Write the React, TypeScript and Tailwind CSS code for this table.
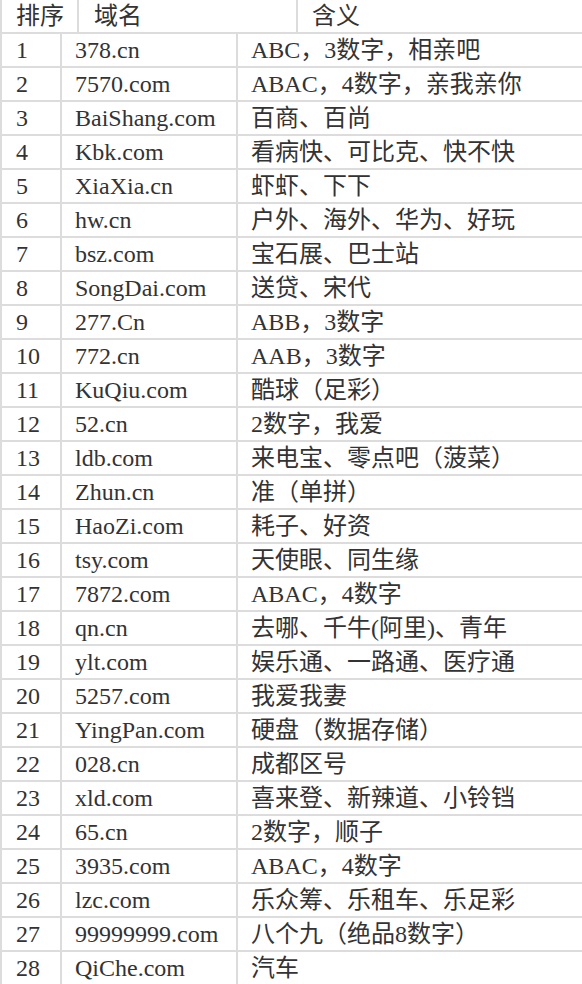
const rows: [string, string][] = [
  ['378.cn', 'ABC，3数字，相亲吧'],
  ['7570.com', 'ABAC，4数字，亲我亲你'],
  ['BaiShang.com', '百商、百尚'],
  ['Kbk.com', '看病快、可比克、快不快'],
  ['XiaXia.cn', '虾虾、下下'],
  ['hw.cn', '户外、海外、华为、好玩'],
  ['bsz.com', '宝石展、巴士站'],
  ['SongDai.com', '送贷、宋代'],
  ['277.Cn', 'ABB，3数字'],
  ['772.cn', 'AAB，3数字'],
  ['KuQiu.com', '酷球（足彩）'],
  ['52.cn', '2数字，我爱'],
  ['ldb.com', '来电宝、零点吧（菠菜）'],
  ['Zhun.cn', '准（单拼）'],
  ['HaoZi.com', '耗子、好资'],
  ['tsy.com', '天使眼、同生缘'],
  ['7872.com', 'ABAC，4数字'],
  ['qn.cn', '去哪、千牛(阿里)、青年'],
  ['ylt.com', '娱乐通、一路通、医疗通'],
  ['5257.com', '我爱我妻'],
  ['YingPan.com', '硬盘（数据存储）'],
  ['028.cn', '成都区号'],
  ['xld.com', '喜来登、新辣道、小铃铛'],
  ['65.cn', '2数字，顺子'],
  ['3935.com', 'ABAC，4数字'],
  ['lzc.com', '乐众筹、乐租车、乐足彩'],
  ['99999999.com', '八个九（绝品8数字）'],
  ['QiChe.com', '汽车'],
]

export default function App() {
  return (
    <div
      className="w-[582px] h-[984px] overflow-hidden bg-white text-[#333] text-[24px]"
      style={{ fontFamily: '"Liberation Serif", "Noto Sans CJK SC", serif' }}
    >
      {/* header row */}
      <div className="flex h-[34px] border-b-2 border-[#dcdcdc]">
        <div className="w-[79px] shrink-0 border-l-2 border-r-2 border-[#dcdcdc] pl-[14px] leading-[32px] whitespace-nowrap">
          排序
        </div>
        <div className="w-[219px] shrink-0 border-r-2 border-[#dcdcdc] pl-[15px] leading-[32px] whitespace-nowrap">
          域名
        </div>
        <div className="flex-1 pl-[14px] leading-[32px] whitespace-nowrap">含义</div>
      </div>

      {rows.map(([domain, meaning], i) => (
        <div key={domain} className="flex h-[34px] border-b-2 border-[#dcdcdc]">
          <div className="w-[62px] shrink-0 border-l-2 border-r-2 border-[#dcdcdc] pl-[14px] leading-[32px] whitespace-nowrap">
            {i + 1}
          </div>
          <div className="w-[176px] shrink-0 border-r-2 border-[#dcdcdc] pl-[13px] leading-[32px] whitespace-nowrap">
            {domain}
          </div>
          <div className="flex-1 pl-[13px] leading-[32px] whitespace-nowrap">{meaning}</div>
        </div>
      ))}
    </div>
  )
}
